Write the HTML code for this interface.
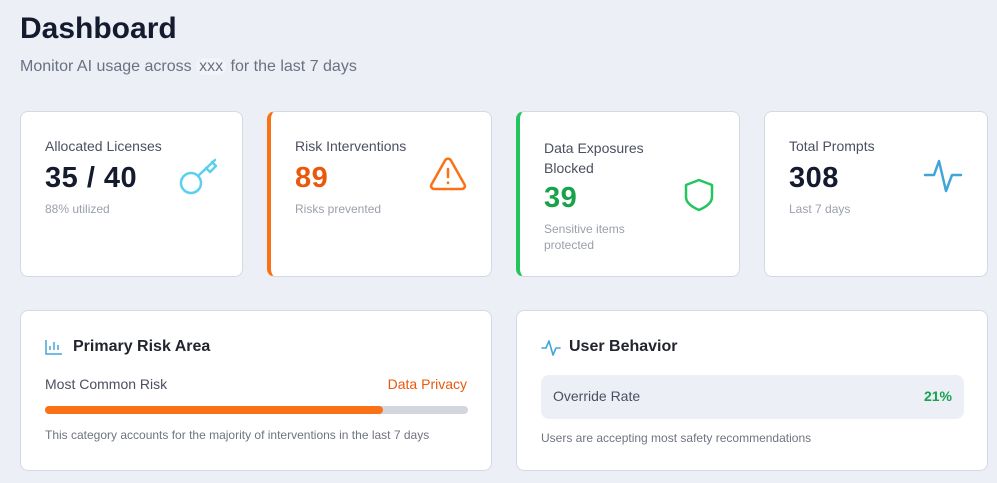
<!DOCTYPE html>
<html><head><style>
*{box-sizing:border-box;margin:0;padding:0}
body{width:997px;height:483px;background:#eceff6;font-family:"Liberation Sans",sans-serif;position:relative;overflow:hidden;color:#111827}
.abs{position:absolute}
.card{position:absolute;background:#fff;border:1px solid #d5d9e3;border-radius:8px;overflow:hidden}
.lbl{position:absolute;font-size:14px;color:#4b5060;white-space:nowrap}
.val{position:absolute;font-size:29px;font-weight:bold;color:#151b2e;letter-spacing:0.5px}
.sub{position:absolute;font-size:12px;color:#9a9fab;line-height:16px}
</style></head><body>
<div class="abs" style="left:20px;top:12px;font-size:30px;font-weight:bold;color:#151b2e">Dashboard</div>
<div class="abs" style="left:20px;top:58px;font-size:16px;color:#6b7180">Monitor AI usage across <span style="background:#f2f4f9;border-radius:10px;padding:0 3px">xxx</span> for the last 7 days</div>

<div class="card" style="left:20px;top:111px;width:223px;height:166px">
<div class="lbl" style="left:24px;top:26px">Allocated Licenses</div>
<div class="val" style="left:24px;top:50px">35 / 40</div>
<div class="sub" style="left:24px;top:89px">88% utilized</div>
<svg class="abs" style="left:156px;top:44px" width="42" height="40" viewBox="0 0 42 40" fill="none" stroke="#5bd0ee" stroke-width="2.5" stroke-linecap="round" stroke-linejoin="round"><circle cx="14" cy="27" r="10"/><path d="M21 20L38 4M29 12l4 4 6-6-4-4"/></svg>
</div>

<div class="card" style="left:267px;top:111px;width:225px;height:166px;border-left:4px solid #f97316">
<div class="lbl" style="left:24px;top:26px">Risk Interventions</div>
<div class="val" style="left:24px;top:50px;color:#ea580c">89</div>
<div class="sub" style="left:24px;top:89px">Risks prevented</div>
<svg class="abs" style="left:158px;top:45px" width="38" height="34" viewBox="0 0 38 34" fill="none" stroke="#f97316" stroke-width="2.5" stroke-linecap="round" stroke-linejoin="round"><path d="M16 3.5L2.5 27.5a3 3 0 0 0 2.6 4.5h27.8a3 3 0 0 0 2.6-4.5L22 3.5a3.5 3.5 0 0 0-6 0z"/><path d="M19 12v8M19 25.5v.5"/></svg>
</div>

<div class="card" style="left:516px;top:111px;width:224px;height:166px;border-left:4px solid #22c55e">
<div class="lbl" style="left:24px;top:26px;line-height:20px">Data Exposures<br>Blocked</div>
<div class="val" style="left:24px;top:70px;color:#16a34a">39</div>
<div class="sub" style="left:24px;top:109px">Sensitive items<br>protected</div>
<svg class="abs" style="left:164px;top:66px" width="30" height="34" viewBox="0 0 30 34" fill="none" stroke="#22c55e" stroke-width="2.5" stroke-linejoin="round"><path d="M15 2L2 7v12c0 6 6 10 13 13 7-3 13-7 13-13V7z"/></svg>
</div>

<div class="card" style="left:764px;top:111px;width:224px;height:166px">
<div class="lbl" style="left:24px;top:26px">Total Prompts</div>
<div class="val" style="left:24px;top:50px">308</div>
<div class="sub" style="left:24px;top:89px">Last 7 days</div>
<svg class="abs" style="left:158px;top:46px" width="40" height="36" viewBox="0 0 40 36" fill="none" stroke="#42a5d8" stroke-width="2.5" stroke-linecap="round" stroke-linejoin="round"><path d="M2 17h9l5-14 7 30 6-16h9"/></svg>
</div>

<div class="card" style="left:20px;top:310px;width:472px;height:161px">
<svg class="abs" style="left:24px;top:28px" width="18" height="16" viewBox="0 0 18 16" fill="none" stroke="#42a5d8" stroke-width="1.5"><path d="M1 1v14h16M5 11V7M9 11V3M13 11V6"/></svg>
<div class="abs" style="left:52px;top:27px;font-size:16px;font-weight:bold;color:#22252e">Primary Risk Area</div>
<div class="lbl" style="left:24px;top:65px">Most Common Risk</div>
<div class="abs" style="right:24px;top:65px;font-size:14px;color:#ea580c">Data Privacy</div>
<div class="abs" style="left:24px;top:95px;width:423px;height:8px;background:#d4d6df;border-radius:4px"><div style="width:338px;height:8px;background:#f97316;border-radius:4px"></div></div>
<div class="sub" style="left:24px;top:116px;color:#6f7480">This category accounts for the majority of interventions in the last 7 days</div>
</div>

<div class="card" style="left:516px;top:310px;width:472px;height:161px">
<svg class="abs" style="left:24px;top:28px" width="20" height="18" viewBox="0 0 20 18" fill="none" stroke="#42a5d8" stroke-width="1.6" stroke-linecap="round" stroke-linejoin="round"><path d="M1 9h4l3-7 4 14 3-7h4"/></svg>
<div class="abs" style="left:52px;top:27px;font-size:16px;font-weight:bold;color:#22252e">User Behavior</div>
<div class="abs" style="left:24px;top:64px;width:423px;height:44px;background:#eceff6;border-radius:8px">
<div class="lbl" style="left:12px;top:13px">Override Rate</div>
<div class="abs" style="right:12px;top:13px;font-size:14px;font-weight:bold;color:#16a34a">21%</div>
</div>
<div class="sub" style="left:24px;top:119px;color:#6f7480">Users are accepting most safety recommendations</div>
</div>
</body></html>
